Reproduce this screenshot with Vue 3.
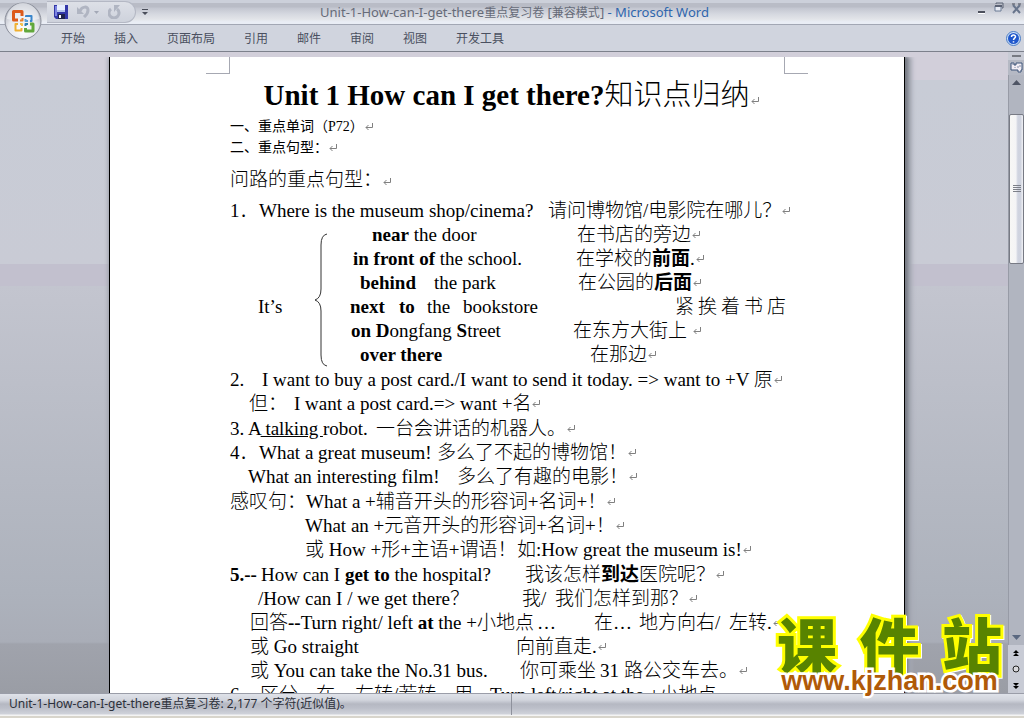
<script setup>
const tabs = ['开始', '插入', '页面布局', '引用', '邮件', '审阅', '视图', '开发工具']

// Each line is a list of [tab stop, text]; *…* marks bold and _…_ marks underline.
const groups = [
  {
    brace: true,
    lines: [
      { cells: [[0, '1．'], [29, 'Where is the museum shop/cinema?'], [318, '请问博物馆/电影院在哪儿？']] },
      { cells: [[142, '*near* the door'], [347, '在书店的旁边']] },
      { cells: [[123, '*in front of* the school.'], [346, '在学校的*前面*.']] },
      { cells: [[130, '*behind*'], [204, 'the park'], [348, '在公园的*后面*']] },
      {
        open: true,
        cells: [[28, 'It’s'], [120, '*next*'], [169, '*to*'], [197, 'the'], [233, 'bookstore'],
          [445, '紧'], [468, '挨'], [491, '着'], [514, '书'], [537, '店']]
      },
      { cells: [[121, '*on D*ongfang *S*treet'], [343, '在东方大街上 ']] },
      { cells: [[130, '*over there*'], [360, '在那边']] }
    ]
  },
  {
    lines: [
      { cells: [[0, '2.'], [32, 'I want to buy a post card./I want to send it today. => want to +V 原']] },
      { cells: [[19, '但：'], [64, 'I want a post card.=> want +名']] }
    ]
  },
  {
    lines: [
      { cells: [[0, '3. A_ talking _robot.'], [146, '一台会讲话的机器人。']] },
      { cells: [[0, '4．'], [29, 'What a great museum!'], [207, '多么了不起的博物馆！']] },
      { cells: [[18, 'What an interesting film!'], [227, '多么了有趣的电影！']] }
    ]
  },
  {
    lines: [
      { cells: [[0, '感叹句：'], [76, 'What a +辅音开头的形容词+名词+！']] },
      { cells: [[75, 'What an +元音开头的形容词+名词+！']] },
      { cells: [[75, '或 How +形+主语+谓语！'], [287, '如:How great the museum is!']] }
    ]
  },
  {
    lines: [
      { cells: [[0, '*5.--*'], [31, 'How can I *get to* the hospital?'], [295, '我该怎样*到达*医院呢？']] },
      { cells: [[28, '/How can I / we get there？'], [292, '我/'], [325, '我们怎样到那？']] },
      { cells: [[20, '回答*--*Turn right/ left *at* the +小地点'], [307, '…'], [364, '在…'], [409, '地方向右/'], [499, '左转.']] },
      { cells: [[20, '或 Go straight'], [286, '向前直走.']] },
      { cells: [[20, '或 You can take the No.31 bus.'], [290, '你可乘坐'], [370, '31'], [394, '路公交车去。']] },
      { open: true, cells: [[0, '6．'], [30, '区分'], [86, '在'], [125, '左转/若转'], [224, '用'], [260, 'Turn left/right at the +小地点']] }
    ]
  }
]

function runs(text) {
  return text.split(/(\*[^*]+\*|_[^_]+_)/).filter(Boolean).map((part) => {
    if (part[0] === '*') return { tag: 'b', text: part.slice(1, -1) }
    if (part[0] === '_') return { tag: 'u', text: part.slice(1, -1) }
    return { tag: 'span', text: part }
  })
}

function cellWidth(cells, i) {
  const next = cells[i + 1]
  return next ? { minWidth: next[0] - cells[i][0] + 'px' } : {}
}
</script>

<template>
  <div class="window">
    <header class="titlebar">
      <div class="quick">
        <button class="plain" aria-label="保存">
          <svg width="14" height="14" viewBox="0 0 14 14">
            <path d="M0 0H14V14H2L0 12Z" fill="#3338a8" />
            <path d="M1 1H3V11H1Z" fill="#7c84e0" />
            <rect x="3" y="0" width="8" height="7" fill="#e6eeff" />
            <rect x="3" y="5" width="8" height="2" fill="#b4c4ee" />
            <rect x="4" y="9" width="7" height="5" fill="#20244c" />
            <rect x="5" y="10" width="2" height="3" fill="#fff" />
          </svg>
        </button>
        <button class="plain" aria-label="撤消">
          <svg width="22" height="14" viewBox="0 0 22 14">
            <path d="M0 2V9H7Z" fill="#b0b5c2" />
            <path d="M3 6C5 1 11 1 11 5C11 9 9 10 7 12" fill="none" stroke="#b0b5c2" stroke-width="3" />
            <path d="M17 6h5l-2.500 3z" fill="#a3a8b6" />
          </svg>
        </button>
        <button class="plain redo" aria-label="恢复">
          <svg width="13" height="14" viewBox="0 0 13 14">
            <path d="M3 4A5 5 0 1 0 9 4" fill="none" stroke="#b0b5c2" stroke-width="3" />
            <path d="M6 0H12L6 7Z" fill="#b0b5c2" />
          </svg>
        </button>
      </div>
      <button class="plain more" aria-label="自定义快速访问工具栏">
        <svg width="6" height="7" viewBox="0 0 6 7">
          <path d="M0 0H6V1H0ZM0 3H6L3 6Z" fill="#4a4e5a" />
        </svg>
      </button>
      <h1 class="caption">Unit-1-How-can-I-get-there<span class="zh">重点复习卷</span> [<span class="zh">兼容模式</span>] <span class="app">- Microsoft Word</span></h1>
      <div class="controls">
        <button class="plain" aria-label="最小化">
          <svg width="9" height="12" viewBox="0 0 9 12"><path d="M1 9H8V11H1Z" fill="#4c505c" /><path d="M1 11H8V12H1Z" fill="#fff" /></svg>
        </button>
        <button class="plain" aria-label="还原">
          <svg width="10" height="12" viewBox="0 0 10 12"><path d="M2 2V1H9V6H8M3 3" fill="none" stroke="#5b6274" /><path d="M1 4H7V9H1Z" fill="#e7ebf4" stroke="#6b7a94" /><path d="M1 3H8V5H1Z" fill="#5b6274" /></svg>
        </button>
        <button class="plain" aria-label="关闭">
          <svg width="10" height="12" viewBox="0 0 10 12"><path d="M1 3L8 11M8 3L1 11" stroke="#68758c" stroke-width="2" /><path d="M0 2H3M6 2H9" stroke="#4c505c" stroke-width="1" /></svg>
        </button>
      </div>
    </header>

    <nav class="ribbon">
      <button v-for="tab in tabs" :key="tab" class="plain tab">{{ tab }}</button>
      <button class="plain help" aria-label="帮助">
        <svg width="15" height="15" viewBox="0 0 15 15">
          <circle cx="7.500" cy="7.500" r="7" fill="#cfe2f8" stroke="#4b7cc4" />
          <circle cx="7.500" cy="7.500" r="5.500" fill="#2058cc" />
          <path d="M5.500 6C5.500 3.500 9.500 3.500 9.500 5.800C9.500 7.200 7.500 7.200 7.500 9M7.500 10.200V11.600" fill="none" stroke="#fff" stroke-width="1.500" />
        </svg>
      </button>
    </nav>

    <button class="office plain" aria-label="Office 按钮">
      <svg width="38" height="38" viewBox="0 0 38 38">
        <defs>
          <radialGradient id="orb" cx="50%" cy="75%" r="70%">
            <stop offset="0" stop-color="#ffffff" />
            <stop offset="0.600" stop-color="#e4e6ec" />
            <stop offset="1" stop-color="#a9adb8" />
          </radialGradient>
        </defs>
        <circle cx="19" cy="19" r="18" fill="url(#orb)" stroke="#8a8e9a" />
        <path d="M3 17A16 16 0 0 1 35 17Q19 21 3 17Z" fill="#f4f5f8" opacity="0.600" />
        <g fill="none" stroke-linejoin="round">
          <path d="M14 18H9.500V9.500H18V14" stroke="#dc5a1c" stroke-width="3" />
          <path d="M16 18.500H18.500V16" stroke="#e8802c" stroke-width="2" />
          <path d="M22 15V14H27.500V19H26" stroke="#3a86cc" stroke-width="2" />
          <path d="M21.500 17V19H24" stroke="#5ba0dc" stroke-width="2" />
          <path d="M14 22H11.500V28.500H17.500V26" stroke="#f0b030" stroke-width="2" />
          <path d="M16 22H18V24" stroke="#f4c050" stroke-width="2" />
          <path d="M21.500 26V29H29V22H26" stroke="#62a83c" stroke-width="3" />
          <path d="M21.500 24V22H24" stroke="#2f7fb4" stroke-width="2" />
        </g>
      </svg>
    </button>

    <main class="workspace">
      <div class="canvas">
        <article class="page">
          <i class="corner"></i>
          <i class="corner right"></i>
          <h2 class="heading"><b>Unit 1 How can I get there?</b>知识点归纳<svg class="mark" viewBox="0 0 8 8"><path d="M7.500 0V4.500H1M3.500 2L1 4.500L3.500 7" /></svg></h2>
          <p class="small">一、重点单词（P72）<svg class="mark" viewBox="0 0 8 8"><path d="M7.500 0V4.500H1M3.500 2L1 4.500L3.500 7" /></svg></p>
          <p class="small">二、重点句型：<svg class="mark" viewBox="0 0 8 8"><path d="M7.500 0V4.500H1M3.500 2L1 4.500L3.500 7" /></svg></p>
          <p class="intro">问路的重点句型：<svg class="mark" viewBox="0 0 8 8"><path d="M7.500 0V4.500H1M3.500 2L1 4.500L3.500 7" /></svg></p>
          <section v-for="(group, g) in groups" :key="g" class="group">
            <svg v-if="group.brace" class="brace" width="14" height="134" viewBox="0 0 14 134">
              <path d="M13 1Q7 2 7 12V56Q7 65 1 67Q7 69 7 78V122Q7 132 13 133" fill="none" stroke="#333" />
            </svg>
            <p v-for="(line, l) in group.lines" :key="l" class="line" :style="{ paddingLeft: line.cells[0][0] + 'px' }">
              <span v-for="(cell, i) in line.cells" :key="i" class="cell" :style="cellWidth(line.cells, i)"><component :is="run.tag" v-for="(run, r) in runs(cell[1])" :key="r">{{ run.text }}</component></span>
              <svg v-if="!line.open" class="mark" viewBox="0 0 8 8"><path d="M7.500 0V4.500H1M3.500 2L1 4.500L3.500 7" /></svg>
            </p>
          </section>
        </article>
      </div>

      <aside class="scroll">
        <div class="split"></div>
        <button class="plain ruler" aria-label="标尺">
          <svg width="13" height="13" viewBox="0 0 13 13">
            <path d="M1 2H4V4H6V2H12V9H11V11H8V9H1Z" fill="#f1edf4" stroke="#3c5578" />
            <path d="M3 1V4M8 5V7M5 6V7M10 4V6" stroke="#7f8aa4" />
          </svg>
        </button>
        <button class="plain arrow" aria-label="向上滚动"><svg width="9" height="5" viewBox="0 0 9 5"><path d="M4.500 0L9 5H0Z" fill="#4e5464" /></svg></button>
        <div class="track">
          <div class="thumb"><i></i><i></i><i></i><i></i></div>
        </div>
        <button class="plain down" aria-label="向下滚动"><svg width="9" height="5" viewBox="0 0 9 5"><path d="M0 0H9L4.500 5Z" fill="#5a6880" /></svg></button>
        <button class="plain nav" aria-label="前一页"><svg width="6" height="7" viewBox="0 0 6 7"><path d="M3 0L6 3H0ZM3 3L6 6H0Z" fill="#000" /></svg></button>
        <button class="plain nav" aria-label="选择浏览对象"><svg width="8" height="8" viewBox="0 0 8 8"><circle cx="4" cy="4" r="3" fill="#d8d8dc" stroke="#222" /></svg></button>
        <button class="plain nav" aria-label="下一页"><svg width="6" height="7" viewBox="0 0 6 7"><path d="M3 4L6 1H0ZM3 7L6 4H0Z" fill="#000" /></svg></button>
      </aside>
    </main>

    <footer class="status">
      <span class="count">Unit-1-How-can-I-get-there重点复习卷: 2,177 个字符(近似值)。</span>
    </footer>

    <div class="watermark">
      <div class="brand"><span>课</span><span>件</span><span>站</span></div>
      <a class="site" href="#">www.kjzhan.com</a>
    </div>
  </div>
</template>

<style>
body {
  margin: 0;
}
</style>

<style scoped>
.window {
  position: relative;
  display: flex;
  flex-direction: column;
  height: 100vh;
  overflow: hidden;
  background: #d0d4de;
  font-family: "Noto Sans", "Noto Sans CJK SC", sans-serif;
  font-size: 13px;
  color: #4a5060;
}

.plain {
  display: flex;
  align-items: center;
  justify-content: center;
  padding: 0;
  border: 0;
  background: none;
  color: inherit;
  font: inherit;
}

.zh {
  font-size: 12px;
}

.titlebar {
  position: relative;
  display: flex;
  align-items: center;
  flex: none;
  height: 24px;
  border-bottom: 1px solid #a2a7b4;
  background: linear-gradient(#ccd0da 0 3px, #b9bcc6 3px 7px, #c3c6d0 8px, #d5d8e0 14px, #e2e4e8 19px, #e9edf5 22px);
}

.quick {
  display: flex;
  align-items: center;
  gap: 9px;
  box-sizing: border-box;
  width: 89px;
  height: 22px;
  margin: 0 0 0 47px;
  padding: 0 0 0 7px;
  border: 1px solid #b4b8c4;
  border-left: 0;
  border-radius: 0 11px 11px 0;
  background: linear-gradient(#dde0e7, #ced2dc);
}

.more {
  margin-left: 6px;
}

.caption {
  flex: 1;
  margin: 0;
  padding-right: 96px;
  color: #666b78;
  font-size: 13px;
  font-weight: 400;
  line-height: 24px;
  text-align: center;
  white-space: nowrap;
}

.app {
  color: #2f66ad;
}

.controls {
  display: flex;
  gap: 8px;
  height: 20px;
  padding-right: 2px;
}

.controls .plain {
  align-items: flex-start;
}

.ribbon {
  display: flex;
  align-items: center;
  gap: 29px;
  flex: none;
  box-sizing: border-box;
  height: 27px;
  padding-left: 61px;
  border-bottom: 1px solid #7d818c;
}

.tab {
  font-size: 12px;
  white-space: nowrap;
}

.help {
  margin-left: auto;
  margin-right: 3px;
}

.office {
  position: absolute;
  left: 4px;
  top: 2px;
}

.workspace {
  display: flex;
  flex: 1;
  min-height: 0;
}

.canvas {
  display: flex;
  flex: 1;
  justify-content: center;
  min-width: 0;
  padding: 5px 0 0 6px;
  overflow: hidden;
  background: linear-gradient(#d2cfda 0 28px, #c8ccd6 28px, #c9cbd5 212px, #c2c0ce 212px 234px, #c3c5cf 234px, #adb2bc 540px, #a9adb7 590px, #a0a3ac 592px, #9a9da5);
}

.page {
  position: relative;
  box-sizing: border-box;
  width: 796px;
  height: 1200px;
  padding: 18px 118px 0 120px;
  border: solid #000;
  border-width: 0 1px;
  background: #fff;
  box-shadow: 3px 0 3px #777b84, 7px 0 4px #a4a8b2, -1px 0 4px #9a9ea8;
  clip-path: inset(0 -12px 0 -5px);
  color: #000;
  font-family: "Liberation Serif", "Noto Sans CJK SC", serif;
  font-size: 19px;
}

.page b {
  font-weight: 700;
}

.corner {
  position: absolute;
  top: 0;
  left: 96px;
  box-sizing: border-box;
  width: 24px;
  height: 17px;
  border: solid #a6a8b2;
  border-width: 0 1px 1px 0;
}

.corner.right {
  right: 96px;
  left: auto;
  border-width: 0 0 1px 1px;
}

.heading {
  margin: 0;
  padding-left: 6px;
  font-size: 29px;
  font-weight: 300;
  line-height: 41px;
  text-align: center;
  white-space: nowrap;
}

.small,
.intro,
.line {
  margin: 0;
  font-weight: 300;
  white-space: pre;
}

.small {
  font-size: 14px;
  font-weight: 400;
  line-height: 21px;
}

.intro {
  padding: 6px 0 3px;
  line-height: 32px;
}

.group {
  position: relative;
  margin-bottom: 1px;
}

.line {
  display: flex;
  align-items: center;
  height: 24px;
  line-height: 24px;
}

.cell {
  flex: none;
}

.mark {
  flex: none;
  width: 8px;
  height: 8px;
  margin-left: 1px;
  fill: none;
  stroke: #808080;
}

.brace {
  position: absolute;
  left: 84px;
  top: 34px;
}

.scroll {
  display: flex;
  flex-direction: column;
  align-items: stretch;
  flex: none;
  width: 16px;
  background: #c8cbd5;
}

.split {
  flex: none;
  height: 2px;
  margin: 3px 3px 3px 4px;
  background: #777a82;
}

.ruler {
  height: 15px;
  background: #b5b9c4;
}

.arrow,
.down {
  height: 15px;
  border: solid #979ba6;
  border-width: 0 0 0 1px;
  background: #b1b5c0;
}

.track {
  flex: 1;
  min-height: 0;
  padding-top: 24px;
  border-left: 1px solid #979ba6;
  background: #b1b5c0;
}

.thumb {
  display: flex;
  flex-direction: column;
  align-items: center;
  justify-content: center;
  gap: 1px;
  box-sizing: border-box;
  height: 29%;
  border: 1px solid #777a84;
  border-radius: 2px;
  background: linear-gradient(90deg, #f7f7f5, #f4f4f6 45%, #d0d4e0 60%, #cfd3df 80%, #f0f0f4);
}

.thumb i {
  width: 8px;
  height: 1px;
  background: #7c7f88;
}

.nav {
  height: 16px;
}

.status {
  flex: none;
  box-sizing: border-box;
  height: 25px;
  border-top: 1px solid #9a9da8;
  background: linear-gradient(#dfe2e9 0, #d2d5dd 6px, #b5b8c2 10px, #bcbfc9 14px, #cfd2da 20px, #f4f4f4 21px 22px, #d8d5cc 22px);
  color: #2c303a;
  font-size: 12px;
  line-height: 20px;
  white-space: nowrap;
}

.count {
  display: block;
  box-sizing: border-box;
  width: 50%;
  height: 21px;
  padding-left: 9px;
  border-right: 1px solid #8e919c;
}

.watermark {
  position: absolute;
  right: 22px;
  bottom: 22px;
  display: flex;
  flex-direction: column;
  width: 225px;
}

.brand {
  display: flex;
  justify-content: space-between;
  margin-bottom: -5px;
  color: #588300;
  font-family: "Noto Sans CJK SC", sans-serif;
  font-size: 60px;
  font-weight: 900;
  line-height: 56px;
  -webkit-text-stroke: 6px #ff0;
  paint-order: stroke fill;
  filter: drop-shadow(1px 1px 0 #fff);
}

.site {
  position: relative;
  color: #b05a08;
  font-family: "Liberation Sans", sans-serif;
  font-size: 27px;
  font-weight: 700;
  line-height: 30px;
  text-align: center;
  text-decoration: none;
  -webkit-text-stroke: 5px #fff;
  paint-order: stroke fill;
}
</style>
